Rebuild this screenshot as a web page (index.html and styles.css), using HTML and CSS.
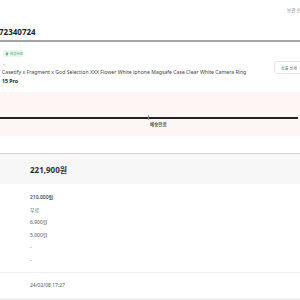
FILE: index.html
```html
<!DOCTYPE html>
<html lang="ko">
<head>
<meta charset="utf-8">
<link rel="stylesheet" href="styles.css">
</head>
<body>
<div class="page">
  <div class="topbar"><span class="topbar-link">보관 신청</span></div>
  <div class="order-no">72340724</div>
  <div class="product">
    <div class="product-info">
      <div class="badge">
        <svg class="bolt" viewBox="0 0 6 8" width="4" height="6"><path d="M3.6 0 L0.6 4.4 H2.6 L2 8 L5.4 3.4 H3.4 Z" fill="#22b55a"/></svg>
        <span>배송완료</span>
      </div>
      <div class="dash">-</div>
      <div class="title">Casetify x Fragment x God Selection XXX Flower White iphone Magsafe Case Clear White Camera Ring</div>
      <div class="model">15 Pro</div>
    </div>
    <div class="detail-btn">상품 상세</div>
  </div>
  <div class="status">
    <div class="track"><span class="tick"></span></div>
    <div class="status-label">배송완료</div>
  </div>
  <div class="gap"></div>
  <div class="total"><span class="total-value">221,900원</span></div>
  <div class="rows">
    <div class="row strong">210,000원</div>
    <div class="row">무료</div>
    <div class="row">6,900원</div>
    <div class="row">5,000원</div>
    <div class="row">-</div>
    <div class="row">-</div>
  </div>
  <div class="date">24/02/08 17:27</div>
</div>
</body>
</html>
```
FILE: styles.css
```css
html, body {
  margin: 0;
  padding: 0;
  background: #fff;
}
body {
  font-family: "Noto Sans", "Noto Sans CJK KR", sans-serif;
  color: #333;
  width: 300px;
  height: 300px;
  overflow: hidden;
}
.page {
  display: flex;
  flex-direction: column;
}
.topbar {
  height: 20px;
  display: flex;
  align-items: center;
  padding-left: 287px;
  white-space: nowrap;
  overflow: hidden;
}
.topbar-link {
  font-size: 4.5px;
  color: #777;
}
.order-no {
  font-size: 8px;
  font-weight: 700;
  color: #222;
  height: 20px;
  line-height: 24px;
  margin-left: -1px;
  border-bottom: 2px solid #a3a3a3;
}
.product {
  display: flex;
  justify-content: space-between;
  align-items: flex-start;
  padding: 8px 0 0 2px;
  height: 50px;
  box-sizing: border-box;
  background: #fff;
}
.product-info {
  display: flex;
  flex-direction: column;
}
.badge {
  display: flex;
  align-items: center;
  gap: 1px;
  background: #eaf7ef;
  border-radius: 1px;
  width: 20px;
  height: 7px;
  padding-left: 2px;
  margin-left: 1px;
  box-sizing: border-box;
  font-size: 3.5px;
  color: #3bb36a;
  white-space: nowrap;
}
.bolt {
  display: block;
  flex: none;
}
.dash {
  font-size: 5px;
  color: #555;
  margin-top: 4px;
  height: 6px;
  line-height: 6px;
  padding-left: 1px;
}
.title {
  font-size: 5.15px;
  color: #444;
  white-space: nowrap;
  height: 8px;
  line-height: 8px;
  margin-top: 1px;
}
.model {
  font-size: 5.2px;
  font-weight: 700;
  color: #222;
  height: 8px;
  line-height: 8px;
  margin-top: 1px;
}
.detail-btn {
  margin-top: 11px;
  margin-right: -4px;
  width: 30px;
  height: 13px;
  border: 1px solid #e6e6e6;
  border-radius: 3px;
  box-sizing: border-box;
  font-size: 4px;
  color: #666;
  display: flex;
  align-items: center;
  justify-content: center;
  white-space: nowrap;
}
.status {
  background: #fdf6f5;
  height: 44px;
  display: flex;
  flex-direction: column;
  align-items: flex-start;
}
.track {
  margin-top: 25px;
  width: 298px;
  height: 1.5px;
  background: #222;
  position: relative;
}
.tick {
  position: absolute;
  left: 148px;
  top: -2px;
  width: 1px;
  height: 5px;
  background: #888;
}
.status-label {
  margin-top: 2px;
  margin-left: 150px;
  font-size: 4.5px;
  font-weight: 700;
  color: #555;
  white-space: nowrap;
}
.gap {
  height: 17px;
  border-bottom: 1px solid #d0d0d0;
}
.total {
  height: 30px;
  background: #f7f7f7;
  display: flex;
  align-items: center;
  padding-left: 30px;
}
.total-value {
  font-size: 8px;
  font-weight: 700;
  color: #333;
}
.rows {
  display: flex;
  flex-direction: column;
  padding: 7px 0 6px 30px;
  border-bottom: 1px solid #efefef;
}
.row {
  height: 12.5px;
  line-height: 12.5px;
  font-size: 5px;
  color: #555;
}
.row.strong {
  color: #333;
  font-weight: 500;
}
.date {
  height: 25px;
  line-height: 25px;
  padding-left: 30px;
  font-size: 5px;
  color: #555;
  border-bottom: 3px solid #f0f0f0;
}
```
